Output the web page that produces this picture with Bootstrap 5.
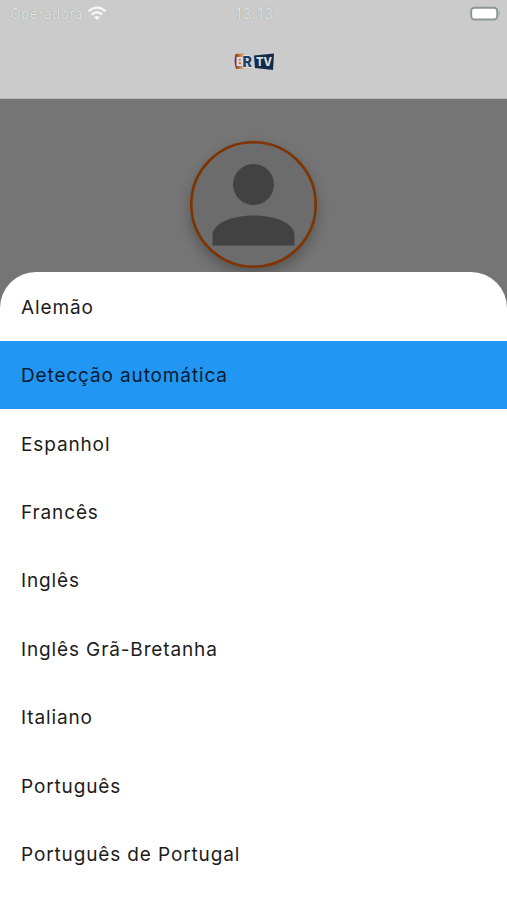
<!DOCTYPE html>
<html lang="pt">
<head>
<meta charset="utf-8">
<meta name="viewport" content="width=device-width, initial-scale=1">
<title>Idiomas</title>
<link href="https://cdn.jsdelivr.net/npm/bootstrap@5.3.0/dist/css/bootstrap.min.css" rel="stylesheet">
<style>
body { font-family: Inter, "Liberation Sans", sans-serif; background: #757575; }
.screen { height: 900px; }
.app-header { height: 99px; background: #cbcbcb; border-bottom: 1px solid #b5b5b5; }
.status-bar { height: 27px; padding: 0 6px 0 10px; color: #e0e3e1; font-size: 14px; line-height: 27px; letter-spacing: .25px; text-shadow: 0 0 1px #858b87; }
.status-bar > * { flex: 1 1 0; }
.clock { font-size: 15px; letter-spacing: .6px; padding-right: 2px; }
.brand-logo { height: 70px; }
.profile { height: 173px; background: #757575; padding-top: 42px; }
.avatar { width: 127px; height: 127px; background: #6c6c6c; box-shadow: 0 6px 13px rgba(0,0,0,.27); }
.sheet { border-radius: 36px 36px 0 0; padding-top: .4px; }
.language { height: 68.4px; padding: 2.5px 21px 0; font-size: 19px; letter-spacing: .87px; color: #1c1c1c; line-height: 28px; }
.language.active { background: #2196f3; color: #061b30; }
</style>
</head>
<body>
<div class="screen d-flex flex-column overflow-hidden">
  <header class="app-header flex-shrink-0">
    <div class="status-bar d-flex align-items-center">
      <div class="d-flex align-items-center gap-1"><span>Operadora</span>
        <svg width="20" height="15" viewBox="0 0 20 15" fill="none" stroke="#f5f6f5" stroke-width="2.3"><path d="M1.5 5.2Q10-2 18.5 5.2M4.7 8.6Q10 4 15.3 8.6"/><path d="M7 11.2Q10 8.8 13 11.2L10 14Z" fill="#f5f6f5" stroke="none"/></svg>
      </div>
      <div class="clock text-center">13:13</div>
      <div class="d-flex justify-content-end">
        <svg width="31" height="16" viewBox="0 0 31 16"><rect x="1.2" y="1.7" width="26" height="11.8" rx="3.2" fill="#fff" stroke="#8b9890" stroke-width="1.9"/><path d="M29 5.2q1.8 2.3 0 4.6z" fill="#a4b9ac" stroke="#a4b9ac"/></svg>
      </div>
    </div>
    <div class="brand-logo d-flex justify-content-center align-items-center">
      <svg width="42" height="20" viewBox="0 0 42 20" font-family="Inter, sans-serif" font-weight="800">
        <defs><linearGradient id="flame" x2="1"><stop stop-color="#7c2719"/><stop offset=".6" stop-color="#c98238"/><stop offset="1" stop-color="#d69a55"/></linearGradient></defs>
        <path d="M2.5 2L11 1.5V16.5L3 17Q.5 10 2.5 2Z" fill="url(#flame)"/>
        <text x="3" y="14" font-size="12" fill="#dedfe2" textLength="8" lengthAdjust="spacingAndGlyphs">B</text>
        <text x="9.5" y="15" font-size="14" fill="#253e68" stroke="#dfe2e7" stroke-width="1.4" paint-order="stroke" textLength="9.5" lengthAdjust="spacingAndGlyphs">R</text>
        <path d="M21 3.5L41 1.5L40 18L22 16Z" fill="#142a49"/>
        <text x="23" y="14" font-size="12" fill="#d7dce2" textLength="16" lengthAdjust="spacingAndGlyphs">TV</text>
      </svg>
    </div>
  </header>
  <section class="profile flex-shrink-0 d-flex justify-content-center align-items-start">
    <div class="avatar rounded-circle flex-shrink-0">
      <svg class="d-block" width="127" height="127" viewBox="0 0 127 127" fill="#424242"><circle cx="63.5" cy="63.5" r="62.2" fill="none" stroke="#803300" stroke-width="2.6"/><circle cx="63.5" cy="43.5" r="20.5"/><path d="M22.5 104.5V94.5C22.5 81 44.5 74.5 63.5 74.5S104.500 81 104.500 94.500V104.500Z"/></svg>
    </div>
  </section>
  <main class="flex-grow-1">
    <div class="sheet bg-white h-100 position-relative overflow-hidden">
      <div class="d-flex flex-column">
        <div class="language d-flex align-items-center">Alemão</div>
        <div class="language active d-flex align-items-center">Detecção automática</div>
        <div class="language d-flex align-items-center">Espanhol</div>
        <div class="language d-flex align-items-center">Francês</div>
        <div class="language d-flex align-items-center">Inglês</div>
        <div class="language d-flex align-items-center">Inglês Grã-Bretanha</div>
        <div class="language d-flex align-items-center">Italiano</div>
        <div class="language d-flex align-items-center">Português</div>
        <div class="language d-flex align-items-center">Português de Portugal</div>
      </div>
    </div>
  </main>
</div>
<script src="https://cdn.jsdelivr.net/npm/bootstrap@5.3.0/dist/js/bootstrap.bundle.min.js"></script>
</body>
</html>
